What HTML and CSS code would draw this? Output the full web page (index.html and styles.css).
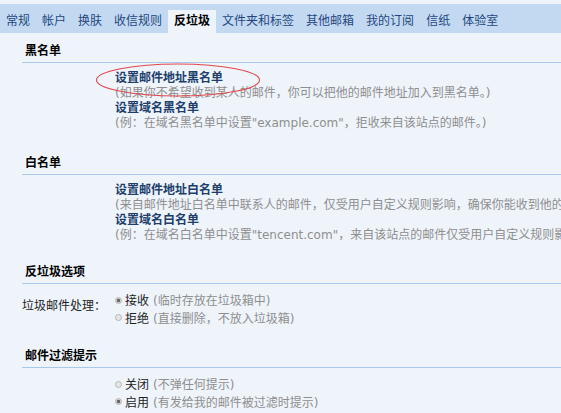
FILE: index.html
```html
<!DOCTYPE html>
<html lang="zh-CN">
<head>
<meta charset="utf-8">
<title>反垃圾设置</title>
<link rel="stylesheet" href="styles.css">
</head>
<body>
<div class="page">
  <nav class="tabs">
    <span class="tab">常规</span>
    <span class="tab">帐户</span>
    <span class="tab">换肤</span>
    <span class="tab">收信规则</span>
    <span class="tab active">反垃圾</span>
    <span class="tab">文件夹和标签</span>
    <span class="tab">其他邮箱</span>
    <span class="tab">我的订阅</span>
    <span class="tab">信纸</span>
    <span class="tab">体验室</span>
  </nav>

  <section class="section first">
    <div class="sec-title">黑名单</div>
    <div class="items">
      <div class="item-title">设置邮件地址黑名单</div>
      <div class="desc">(如果你不希望收到某人的邮件，你可以把他的邮件地址加入到黑名单。)</div>
      <div class="item-title">设置域名黑名单</div>
      <div class="desc">(例：在域名黑名单中设置"example.com"，拒收来自该站点的邮件。)</div>
    </div>
  </section>

  <section class="section second">
    <div class="sec-title">白名单</div>
    <div class="items">
      <div class="item-title">设置邮件地址白名单</div>
      <div class="desc">(来自邮件地址白名单中联系人的邮件，仅受用户自定义规则影响，确保你能收到他的邮件。)</div>
      <div class="item-title">设置域名白名单</div>
      <div class="desc">(例：在域名白名单中设置"tencent.com"，来自该站点的邮件仅受用户自定义规则影响。)</div>
    </div>
  </section>

  <section class="section third">
    <div class="sec-title">反垃圾选项</div>
    <div class="options">
      <div class="opt-label">垃圾邮件处理：</div>
      <div class="opt-list">
        <div class="opt"><span class="radio checked"></span><span class="opt-name">接收</span><span class="opt-note">(临时存放在垃圾箱中)</span></div>
        <div class="opt"><span class="radio"></span><span class="opt-name">拒绝</span><span class="opt-note">(直接删除，不放入垃圾箱)</span></div>
      </div>
    </div>
  </section>

  <section class="section fourth">
    <div class="sec-title">邮件过滤提示</div>
    <div class="options">
      <div class="opt-label"></div>
      <div class="opt-list">
        <div class="opt"><span class="radio"></span><span class="opt-name">关闭</span><span class="opt-note">(不弹任何提示)</span></div>
        <div class="opt"><span class="radio checked"></span><span class="opt-name">启用</span><span class="opt-note">(有发给我的邮件被过滤时提示)</span></div>
      </div>
    </div>
  </section>

  <svg class="mark" width="170" height="36" viewBox="0 0 170 36" aria-hidden="true">
    <ellipse cx="83" cy="18" rx="81.5" ry="16" fill="none" stroke="#e2474d" stroke-width="1.1"/>
  </svg>
</div>
</body>
</html>
```

FILE: styles.css
```css
html, body {
  margin: 0;
  padding: 0;
  overflow: hidden;
  background: #eff4fb;
}

body {
  font-family: "DejaVu Sans", "Noto Sans CJK SC", sans-serif;
  font-size: 12px;
  color: #000;
  width: 561px;
  height: 413px;
}

.page {
  position: relative;
  white-space: nowrap;
}

.tabs {
  margin-top: 4px;
  height: 29px;
  background: #c3d9f2;
  display: flex;
  align-items: flex-end;
}

.tab {
  display: block;
  height: 23px;
  line-height: 23px;
  padding: 0 6px;
  color: #1f477e;
}

.tab.active {
  background: #eff4fb;
  color: #000;
  font-weight: bold;
}

.section {
  margin-left: 22px;
}

.section.first { margin-top: 10px; }
.section.second { margin-top: 24px; }
.section.third { margin-top: 21px; }
.section.fourth { margin-top: 22px; }

.sec-title {
  line-height: 16px;
  padding: 0 0 3px 3px;
  border-bottom: 1px solid #a9c9ec;
  font-weight: bold;
  color: #000;
}

.items {
  padding: 8px 0 0 93px;
  line-height: 15px;
}

.item-title {
  font-weight: bold;
  color: #213d6c;
}

.desc {
  color: #8e8e8e;
}

.options {
  display: flex;
  padding-top: 7px;
}

.opt-label {
  width: 93px;
  line-height: 16px;
  padding-top: 7px;
  color: #222;
}

.opt-list {
  display: flex;
  flex-direction: column;
}

.opt {
  display: flex;
  align-items: center;
  height: 17.5px;
}

.radio {
  width: 5px;
  height: 5px;
  border: 1px solid #b4b4b4;
  border-radius: 50%;
  background: #e6e6e6;
  margin: 1px 3px 0 0;
}

.radio.checked {
  background: radial-gradient(circle, #6a6a6a 0 45%, #cfcfcf 55%);
}

.opt-name {
  color: #222;
  margin-right: 4px;
}

.opt-note {
  color: #8e8e8e;
}

.mark {
  position: absolute;
  left: 95px;
  top: 58px;
}
```
